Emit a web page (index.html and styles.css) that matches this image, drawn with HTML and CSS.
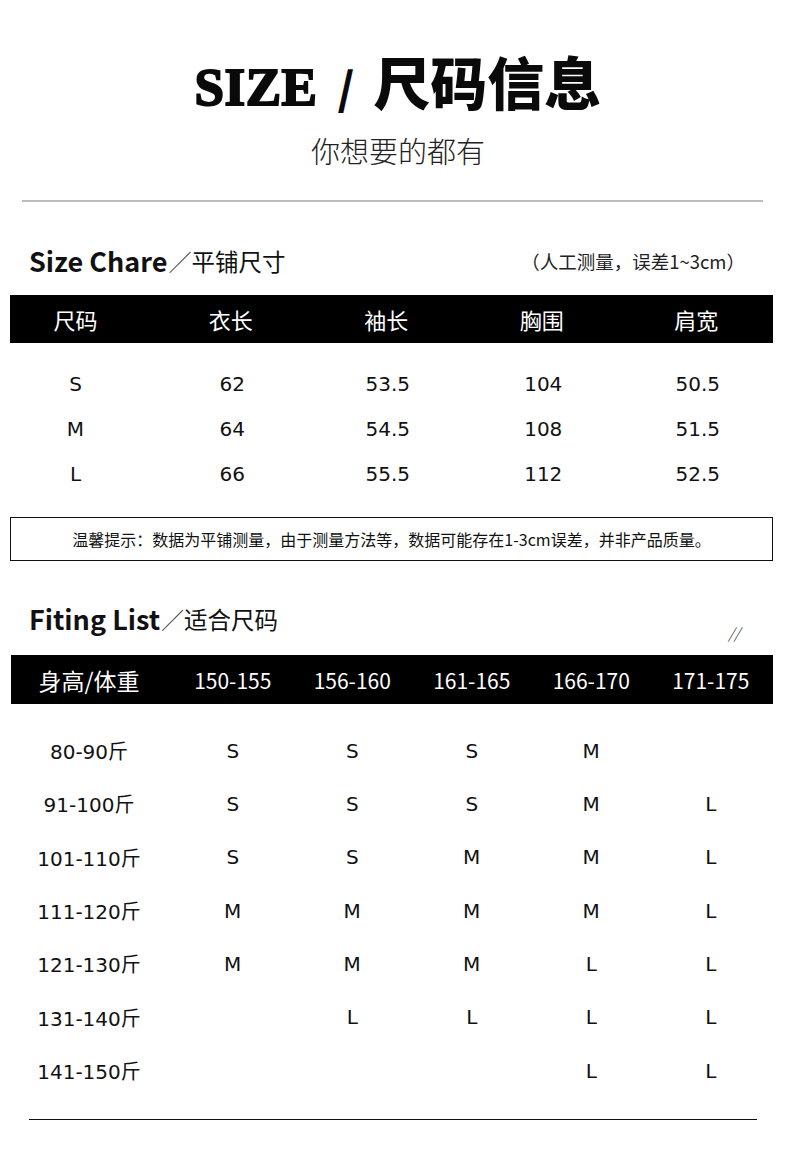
FILE: index.html
```html
<!DOCTYPE html>
<html lang="zh-CN">
<head>
<meta charset="utf-8">
<title>SIZE / 尺码信息</title>
<link rel="stylesheet" href="styles.css">
</head>
<body>
<header class="hero">
  <h1 class="hero-title"><span class="hero-en">SIZE</span><span class="hero-slash">/</span><span class="hero-cn">尺码信息</span></h1>
  <p class="hero-sub">你想要的都有</p>
</header>
<div class="divider"></div>

<section class="chart">
  <div class="sec-head">
    <h2 class="sec-title"><b>Size Chare</b><span class="sec-sep">／</span><span class="sec-cn">平铺尺寸</span></h2>
    <span class="sec-note">（人工测量，误差1~3cm）</span>
  </div>
  <div class="bar size-grid">
    <span class="c1">尺码</span><span>衣长</span><span>袖长</span><span>胸围</span><span>肩宽</span>
  </div>
  <div class="size-body">
    <div class="size-grid data-row"><span class="c1">S</span><span>62</span><span>53.5</span><span>104</span><span>50.5</span></div>
    <div class="size-grid data-row"><span class="c1">M</span><span>64</span><span>54.5</span><span>108</span><span>51.5</span></div>
    <div class="size-grid data-row"><span class="c1">L</span><span>66</span><span>55.5</span><span>112</span><span>52.5</span></div>
  </div>
  <div class="notice">温馨提示：数据为平铺测量，由于测量方法等，数据可能存在1-3cm误差，并非产品质量。</div>
</section>

<section class="fit">
  <div class="sec-head fit-head">
    <h2 class="sec-title"><b>Fiting List</b><span class="sec-sep">／</span><span class="sec-cn">适合尺码</span></h2>
    <span class="fit-mark">//</span>
  </div>
  <div class="bar fit-bar fit-grid">
    <span class="f1">身高/体重</span><span>150-155</span><span>156-160</span><span>161-165</span><span>166-170</span><span>171-175</span>
  </div>
  <div class="fit-body">
    <div class="fit-grid fit-row"><span class="f1">80-90斤</span><span>S</span><span>S</span><span>S</span><span>M</span><span></span></div>
    <div class="fit-grid fit-row"><span class="f1">91-100斤</span><span>S</span><span>S</span><span>S</span><span>M</span><span>L</span></div>
    <div class="fit-grid fit-row"><span class="f1">101-110斤</span><span>S</span><span>S</span><span>M</span><span>M</span><span>L</span></div>
    <div class="fit-grid fit-row"><span class="f1">111-120斤</span><span>M</span><span>M</span><span>M</span><span>M</span><span>L</span></div>
    <div class="fit-grid fit-row"><span class="f1">121-130斤</span><span>M</span><span>M</span><span>M</span><span>L</span><span>L</span></div>
    <div class="fit-grid fit-row"><span class="f1">131-140斤</span><span></span><span>L</span><span>L</span><span>L</span><span>L</span></div>
    <div class="fit-grid fit-row"><span class="f1">141-150斤</span><span></span><span></span><span></span><span>L</span><span>L</span></div>
  </div>
</section>
<div class="end-line"></div>
</body>
</html>
```

FILE: styles.css
```css
* { box-sizing: border-box; }
html, body { margin: 0; padding: 0; background: #fff; }
body {
  width: 790px;
  min-height: 1150px;
  font-family: "Noto Sans CJK SC", "Noto Sans", sans-serif;
  color: #111;
}

.hero { padding-top: 48px; text-align: center; }
.hero-title {
  margin: 0;
  height: 64px;
  line-height: 64px;
  display: flex;
  justify-content: center;
  align-items: baseline;
  font-weight: 900;
  color: #0a0a0a;
  padding-left: 6px;
}
.hero-en {
  font-family: "Liberation Serif", serif;
  font-size: 53px;
  font-weight: 700;
  letter-spacing: 0.5px;
  -webkit-text-stroke: 2px #0a0a0a;
}
.hero-slash {
  font-family: "Noto Sans CJK SC", sans-serif;
  font-size: 44px;
  font-weight: 900;
  margin: 0 19px 0 20px;
}
.hero-cn {
  font-family: "Noto Sans CJK SC", sans-serif;
  font-size: 57px;
  font-weight: 900;
  letter-spacing: 0;
}
.hero-sub {
  margin: 20px 0 0;
  font-size: 29px;
  line-height: 36px;
  font-weight: 300;
  color: #222;
  padding-left: 6px;
}

.divider {
  margin: 32px 27px 0 22px;
  height: 2px;
  background: #bdbdbd;
}

.sec-head {
  display: flex;
  justify-content: space-between;
  align-items: center;
  height: 36px;
  margin: 41px 45px 0 29px;
}
.sec-title {
  margin: 0;
  font-size: 27px;
  line-height: 36px;
  font-weight: 400;
  display: flex;
  align-items: center;
  color: #111;
}
.sec-title b { font-weight: 700; }
.sec-sep { font-size: 23px; font-weight: 300; color: #333; margin-left: 1px; }
.sec-cn { font-size: 23.5px; font-weight: 400; }
.sec-note { font-size: 18.5px; color: #222; }

.bar {
  background: #000;
  color: #fff;
  font-size: 21px;
  align-items: center;
}

.size-grid {
  display: grid;
  grid-template-columns: 143px 155.5px 155.5px 155.5px 1fr;
  text-align: center;
}
.size-grid .c1 { padding-right: 12px; }
.chart .bar {
  margin: 16px 17px 0 10px;
  height: 48px;
  font-size: 22px;
}
.size-body {
  margin: 0 17px 0 10px;
  padding-top: 18px;
}
.data-row {
  height: 45px;
  align-items: center;
  font-family: "DejaVu Sans", "Noto Sans CJK SC", sans-serif;
  font-size: 20px;
  color: #111;
}
.data-row span:not(.c1) { padding-left: 3px; }

.notice {
  margin: 21px 17px 0 10px;
  height: 44px;
  border: 1.5px solid #111;
  display: flex;
  align-items: center;
  justify-content: center;
  font-size: 16px;
  color: #111;
}

.fit-head { margin-top: 40px; margin-right: 50px; align-items: center; }
.fit-mark {
  align-self: flex-end;
  margin-bottom: -6px;
  font-size: 15px;
  font-style: italic;
  font-weight: 300;
  color: #222;
}
.fit-grid {
  display: grid;
  grid-template-columns: 162px repeat(5, 119.5px);
  text-align: center;
}
.fit-grid .f1 { padding-right: 6px; }
.fit .fit-bar {
  margin: 18px 17px 0 11px;
  height: 49px;
  font-size: 21px;
}
.fit-bar .f1 { font-size: 23px; }
.fit-body {
  margin: 0 17px 0 11px;
  padding-top: 20px;
}
.fit-row {
  height: 53.33px;
  align-items: center;
  font-family: "DejaVu Sans", "Noto Sans CJK SC", sans-serif;
  font-size: 20px;
  color: #111;
}

.end-line {
  margin: 22px 33px 0 29px;
  height: 1px;
  background: #111;
}
```
